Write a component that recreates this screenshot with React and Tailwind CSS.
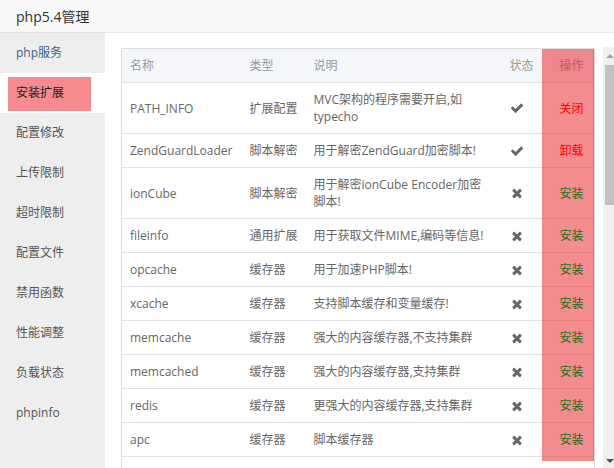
import React from 'react';

const menu = ['php服务', '安装扩展', '配置修改', '上传限制', '超时限制', '配置文件', '禁用函数', '性能调整', '负载状态', 'phpinfo'];

const rows = [
  { name: 'PATH_INFO', type: '扩展配置', desc: 'MVC架构的程序需要开启,如typecho', ok: true, act: '关闭' },
  { name: 'ZendGuardLoader', type: '脚本解密', desc: '用于解密ZendGuard加密脚本!', ok: true, act: '卸载' },
  { name: 'ionCube', type: '脚本解密', desc: '用于解密ionCube Encoder加密脚本!', ok: false, act: '安装' },
  { name: 'fileinfo', type: '通用扩展', desc: '用于获取文件MIME,编码等信息!', ok: false, act: '安装' },
  { name: 'opcache', type: '缓存器', desc: '用于加速PHP脚本!', ok: false, act: '安装' },
  { name: 'xcache', type: '缓存器', desc: '支持脚本缓存和变量缓存!', ok: false, act: '安装' },
  { name: 'memcache', type: '缓存器', desc: '强大的内容缓存器,不支持集群', ok: false, act: '安装' },
  { name: 'memcached', type: '缓存器', desc: '强大的内容缓存器,支持集群', ok: false, act: '安装' },
  { name: 'redis', type: '缓存器', desc: '更强大的内容缓存器,支持集群', ok: false, act: '安装' },
  { name: 'apc', type: '缓存器', desc: '脚本缓存器', ok: false, act: '安装' },
];

function Check() {
  return (
    <svg viewBox="0 0 1792 1792" className="w-[14px] h-[14px] fill-[#666]">
      <path d="M1671 566q0 40-28 68l-724 724-136 136q-28 28-68 28t-68-28l-136-136-362-362q-28-28-28-68t28-68l136-136q28-28 68-28t68 28l294 295 656-657q28-28 68-28t68 28l136 136q28 28 28 68z" />
    </svg>
  );
}

function Cross() {
  return (
    <svg viewBox="0 0 1408 1792" className="w-[12px] h-[14px] fill-[#666] ml-[1px]">
      <path d="M1298 1322q0 40-28 68l-136 136q-28 28-68 28t-68-28l-294-294-294 294q-28 28-68 28t-68-28l-136-136q-28-28-28-68t28-68l294-294-294-294q-28-28-28-68t28-68l136-136q28-28 68-28t68 28l294 294 294-294q28-28 68-28t68 28l136 136q28 28 28 68t-28 68l-294 294 294 294q28 28 28 68z" />
    </svg>
  );
}

export default function App() {
  return (
    <div className="w-[614px] h-[468px] overflow-hidden bg-white font-['Open_Sans','Noto_Sans_CJK_SC',sans-serif] text-[12px]">
      <div className="h-[33px] bg-[#f7f7f7] border-b border-[#e5e5e5] px-4 flex items-center text-[14px] text-[#333]">
        php5.4管理
      </div>

      <div className="flex h-[435px]">
        <div className="w-[106px] bg-[#eeeeee] flex flex-col">
          {menu.map((m, i) => (
            <div
              key={m}
              className={`h-10 flex items-center pl-4 relative ${i === 1 ? 'bg-white text-[#222]' : i === 0 ? 'text-[#3a5f8f]' : 'text-[#555]'}`}
            >
              {i === 1 && <div className="absolute left-2 right-[14px] top-1 bottom-[2px] bg-[#f58b8f]" />}
              <span className="relative">{m}</span>
            </div>
          ))}
        </div>

        <div className="flex-1 flex">
          <div className="flex-1 pl-4 pt-[15px] pr-2">
            <div className="relative">
              <table className="w-[473px] table-fixed border-collapse border border-[#dddddd] text-[#666] leading-[17px]">
                <colgroup>
                  <col className="w-[120px]" />
                  <col className="w-[64px]" />
                  <col className="w-[196px]" />
                  <col className="w-[50px]" />
                  <col className="w-[43px]" />
                </colgroup>
                <thead>
                  <tr className="bg-[#f5f6fa] text-[#999] border-b border-[#e2e2e2]">
                    <th className="font-normal text-left px-2 py-2">名称</th>
                    <th className="font-normal text-left px-2 py-2">类型</th>
                    <th className="font-normal text-left px-2 py-2">说明</th>
                    <th className="font-normal text-left px-2 py-2">状态</th>
                    <th className="font-normal text-left px-2 py-2">操作</th>
                  </tr>
                </thead>
                <tbody>
                  {rows.map((r) => (
                    <tr key={r.name} className="border-b border-[#e2e2e2]">
                      <td className="px-2 py-2 align-middle whitespace-nowrap">{r.name}</td>
                      <td className="px-2 py-2 align-middle whitespace-nowrap">{r.type}</td>
                      <td className="pl-2 pr-[14px] py-2 align-middle">{r.desc}</td>
                      <td className="px-2 py-2 align-middle">{r.ok ? <Check /> : <Cross />}</td>
                      <td className="px-2 py-2 align-middle whitespace-nowrap">
                        <span className={`relative z-10 ${r.act === '安装' ? 'text-[#19701c]' : 'text-[#ff0000]'}`}>{r.act}</span>
                      </td>
                    </tr>
                  ))}
                  <tr>
                    <td className="h-[34px]" colSpan={5}></td>
                  </tr>
                </tbody>
              </table>
              <div className="absolute left-[421px] top-[1px] w-[52px] h-[412px] bg-[rgba(233,23,31,0.5)] border-r border-[#e2686f] z-[5]" />
            </div>
          </div>

          <div className="w-[11px] mt-[14px] bg-[#f0f0f0] flex flex-col">
            <div className="h-[18px] flex items-center justify-center pl-[2px]">
              <div className="w-0 h-0 border-l-[4px] border-r-[4px] border-b-[4px] border-l-transparent border-r-transparent border-b-[#a3a3a3]" />
            </div>
            <div className="h-[140px] bg-[#c1c1c1] ml-[2px]" />
            <div className="flex-1" />
            <div className="h-[14px] flex items-center justify-center pl-[2px]">
              <div className="w-0 h-0 border-l-[4px] border-r-[4px] border-t-[4px] border-l-transparent border-r-transparent border-t-[#505050]" />
            </div>
          </div>
        </div>
      </div>
    </div>
  );
}
